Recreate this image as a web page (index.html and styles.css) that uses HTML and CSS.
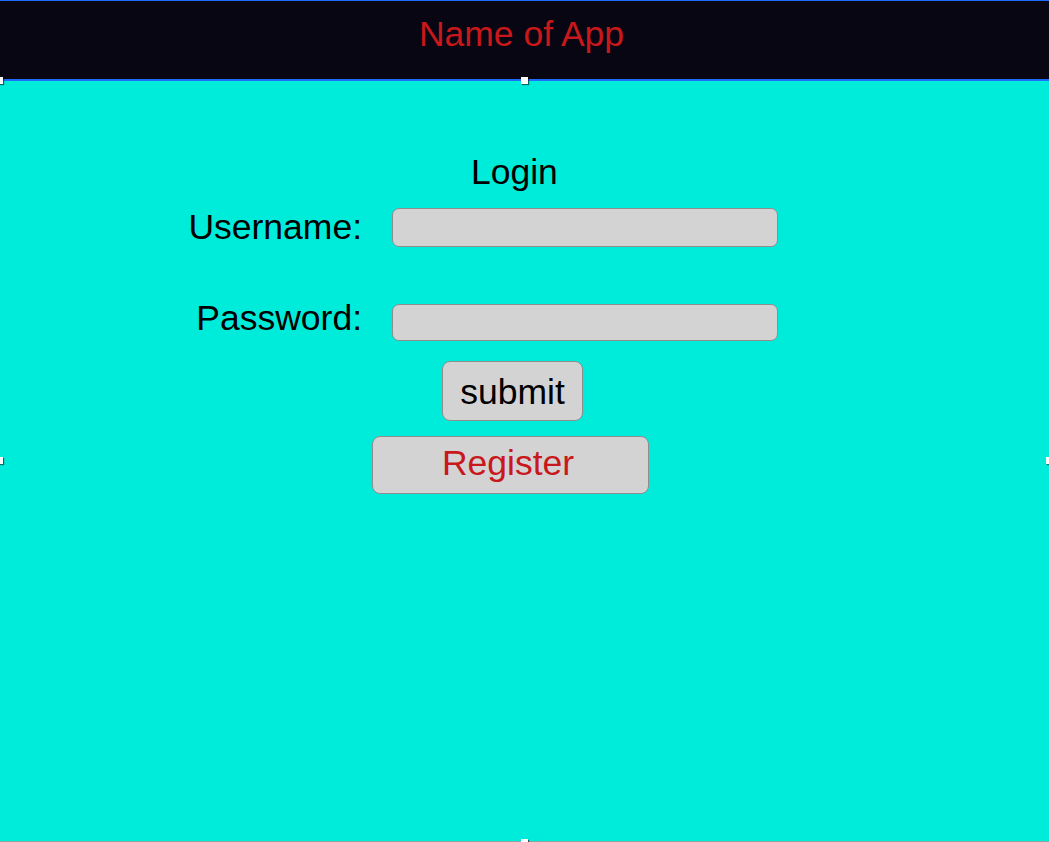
FILE: index.html
```html
<!DOCTYPE html>
<html>
<head>
<meta charset="utf-8">
<title>Name of App</title>
<link rel="stylesheet" href="styles.css">
</head>
<body>
<div class="screen">
  <header class="header">
    <h1 class="app-name">Name of App</h1>
  </header>
  <main class="main">
    <form class="form">
      <div class="login-title">Login</div>
      <div class="row">
        <label class="label">Username:</label>
        <input class="field field-user" type="text">
      </div>
      <div class="row row-pass">
        <label class="label">Password:</label>
        <input class="field field-pass" type="password">
      </div>
      <button class="btn btn-submit" type="button">submit</button>
      <button class="btn btn-register" type="button">Register</button>
    </form>
  </main>
  <span class="handle h-tl"></span>
  <span class="handle h-tc"></span>
  <span class="handle h-ml"></span>
  <span class="handle h-mr"></span>
  <span class="handle h-bc"></span>
</div>
</body>
</html>
```
FILE: styles.css
```css
* { box-sizing: border-box; }
html, body {
  margin: 0;
  padding: 0;
  width: 1049px;
  height: 842px;
  overflow: hidden;
  background: #00ecdb;
}
.screen {
  position: relative;
  width: 1049px;
  height: 842px;
  font-family: "Liberation Sans", Arial, Helvetica, sans-serif;
  font-size: 35.5px;
  line-height: 40px;
  color: #000;
}
.header {
  height: 81px;
  background: #070612;
  border-top: 1px solid #1f6cff;
  border-bottom: 2px solid #1f6cff;
  padding-top: 13px;
  padding-right: 6px;
  text-align: center;
}
.app-name {
  margin: 0;
  font-size: 35.5px;
  font-weight: normal;
  line-height: 40px;
  color: #c8181b;
}
.main {
  height: 761px;
  background: #00ecdb;
  border-bottom: 1px solid #8fa3a0;
  padding-top: 71px;
}
.form {
  display: flex;
  flex-direction: column;
  align-items: flex-start;
  margin: 0 0 0 150px;
}
.login-title {
  margin-left: 321px;
  height: 40px;
}
.row {
  display: flex;
  align-items: flex-start;
  gap: 30px;
  margin-top: 15px;
}
.row-pass { margin-top: 51px; }
.label {
  width: 212px;
  text-align: right;
  line-height: 40px;
}
.field {
  width: 386px;
  background: #d3d3d3;
  border: 1px solid #8e8e8e;
  border-radius: 7px;
  padding: 0 8px;
  font: inherit;
  font-size: 20px;
  outline: none;
}
.field-user { height: 39px; margin-top: 1px; }
.field-pass { height: 37px; margin-top: 6px; }
.btn {
  background: #d3d3d3;
  border: 1px solid #8e8e8e;
  border-radius: 8px;
  font-family: inherit;
  font-size: 35.5px;
  line-height: 40px;
  padding: 0;
  text-align: center;
}
.btn-submit {
  margin-top: 20px;
  margin-left: 292px;
  width: 141px;
  height: 60px;
  padding-top: 10px;
  padding-bottom: 10px;
  color: #000;
}
.btn-register {
  margin-top: 15px;
  margin-left: 222px;
  width: 277px;
  height: 58px;
  padding-top: 6px;
  padding-bottom: 12px;
  padding-right: 5px;
  color: #c8181b;
}
.handle {
  position: absolute;
  width: 7px;
  height: 7px;
  background: #ffffff;
  box-shadow: 1px 1px 1px rgba(0, 0, 0, 0.55);
}
.h-tl { left: -4px; top: 77px; }
.h-tc { left: 521px; top: 77px; }
.h-ml { left: -4px; top: 457px; }
.h-mr { left: 1046px; top: 457px; }
.h-bc { left: 521px; top: 839px; }
```
